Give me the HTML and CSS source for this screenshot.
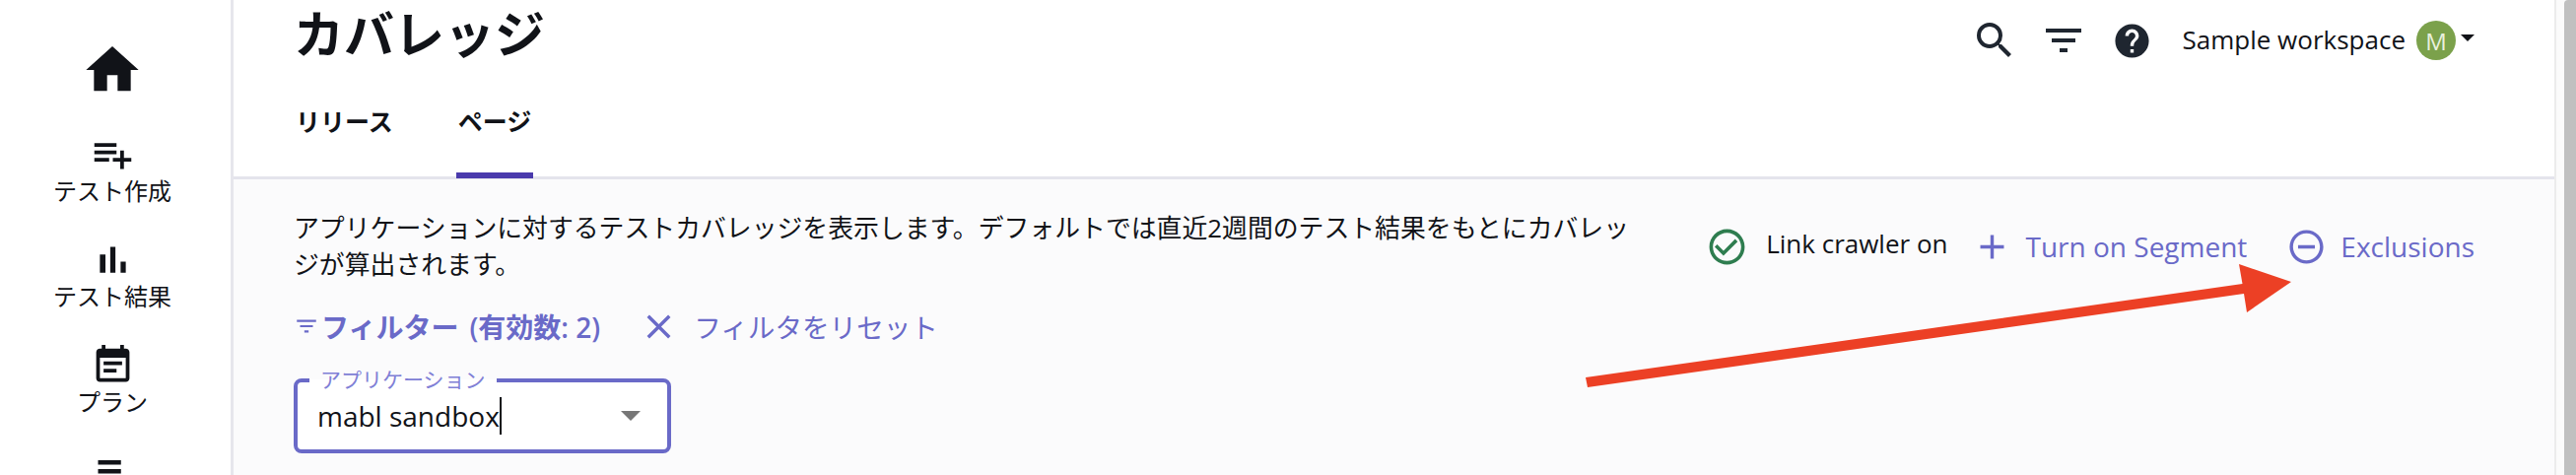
FILE: index.html
```html
<!DOCTYPE html>
<html lang="ja">
<head>
  <meta charset="UTF-8">
  <title>カバレッジ</title>
  <link rel="stylesheet" href="styles.css">
</head>
<body>
  <nav class="sidebar">
    <a class="nav-home">
      <svg class="icon-home" viewBox="0 0 24 24"><path d="M10 20v-6h4v6h5v-8h3L12 3 2 12h3v8z"/></svg>
    </a>
    <a class="nav-item">
      <svg class="icon-nav" viewBox="0 0 24 24"><path d="M14 10H2v2h12v-2zm0-4H2v2h12V6zm4 8v-4h-2v4h-4v2h4v4h2v-4h4v-2h-4zM2 16h8v-2H2v2z"/></svg>
      <span>テスト作成</span>
    </a>
    <a class="nav-item">
      <svg class="icon-nav" viewBox="0 0 24 24"><path d="M5 9.2h3V19H5zM10.6 5h2.8v14h-2.8zm5.6 8H19v6h-2.8z"/></svg>
      <span>テスト結果</span>
    </a>
    <a class="nav-item">
      <svg class="icon-nav" viewBox="0 0 24 24"><path d="M17 10H7v2h10v-2zm2-7h-1V1h-2v2H8V1H6v2H5c-1.11 0-1.99.9-1.99 2L3 19c0 1.1.89 2 2 2h14c1.1 0 2-.9 2-2V5c0-1.1-.9-2-2-2zm0 16H5V8h14v11zm-5-5H7v2h7v-2z"/></svg>
      <span>プラン</span>
    </a>
    <a class="nav-item">
      <svg class="icon-nav" viewBox="0 0 24 24"><path d="M4 6.4h12.4v2.4H4zM4 11.2h12.4v2.4H4zM4 16h12.4v2.4H4z"/></svg>
    </a>
  </nav>

  <div class="main">
    <header class="header">
      <div class="header-top">
        <h1 class="title">カバレッジ</h1>
        <div class="header-actions">
          <svg class="icon-search" viewBox="0 0 24 24"><path d="M15.5 14h-.79l-.28-.27A6.471 6.471 0 0 0 16 9.5 6.5 6.5 0 1 0 9.5 16c1.61 0 3.09-.59 4.23-1.57l.27.28v.79l5 4.99L20.49 19l-4.99-5zm-6 0C7.01 14 5 11.99 5 9.5S7.01 5 9.5 5 14 7.01 14 9.5 11.99 14 9.5 14z"/></svg>
          <svg class="icon-sort" viewBox="0 0 24 24"><path d="M10 18h4v-2h-4v2zM3 6v2h18V6H3zm3 7h12v-2H6v2z"/></svg>
          <svg class="icon-help" viewBox="0 0 24 24"><path d="M12 2C6.48 2 2 6.48 2 12s4.48 10 10 10 10-4.48 10-10S17.52 2 12 2zm1 17h-2v-2h2v2zm2.07-7.75l-.9.92C13.45 12.9 13 13.5 13 15h-2v-.5c0-1.1.45-2.1 1.17-2.83l1.24-1.26c.37-.36.59-.86.59-1.41 0-1.1-.9-2-2-2s-2 .9-2 2H8c0-2.21 1.79-4 4-4s4 1.79 4 4c0 .88-.36 1.68-.93 2.25z"/></svg>
          <span class="workspace">Sample workspace</span>
          <span class="avatar">M</span>
          <span class="caret"></span>
        </div>
      </div>
      <div class="tabs">
        <a class="tab">リリース</a>
        <a class="tab tab-active">ページ</a>
      </div>
    </header>

    <section class="content">
      <div class="info-row">
        <p class="description">アプリケーションに対するテストカバレッジを表示します。デフォルトでは直近2週間のテスト結果をもとにカバレッジが算出されます。</p>
        <div class="info-actions">
          <svg class="icon-check" viewBox="0 0 24 24"><path d="M16.59 7.58 10 14.17l-3.59-3.58L5 12l5 5 8-8zM12 2C6.48 2 2 6.48 2 12s4.48 10 10 10 10-4.48 10-10S17.52 2 12 2zm0 18c-4.42 0-8-3.58-8-8s3.58-8 8-8 8 3.58 8 8-3.58 8-8 8z"/></svg>
          <span class="crawler">Link crawler on</span>
          <svg class="icon-action icon-plus" viewBox="0 0 24 24"><path d="M19 13h-6v6h-2v-6H5v-2h6V5h2v6h6v2z"/></svg>
          <a class="action-link">Turn on Segment</a>
          <svg class="icon-action icon-minus" viewBox="0 0 24 24"><path d="M7 11v2h10v-2H7zm5-9C6.48 2 2 6.48 2 12s4.48 10 10 10 10-4.48 10-10S17.52 2 12 2zm0 18c-4.41 0-8-3.59-8-8s3.59-8 8-8 8 3.59 8 8-3.59 8-8 8z"/></svg>
          <a class="action-link">Exclusions</a>
        </div>
      </div>

      <div class="filter-row">
        <svg class="icon-filter" viewBox="0 0 24 24"><path d="M10 18h4v-2h-4v2zM3 6v2h18V6H3zm3 7h12v-2H6v2z"/></svg>
        <strong class="filter-title">フィルター</strong>
        <strong class="filter-count">(有効数: 2)</strong>
        <svg class="icon-action icon-close" viewBox="0 0 24 24"><path d="M19 6.41L17.59 5 12 10.59 6.41 5 5 6.41 10.59 12 5 17.59 6.41 19 12 13.41 17.59 19 19 17.59 13.41 12z"/></svg>
        <a class="filter-reset">フィルタをリセット</a>
      </div>

      <div class="select">
        <label class="select-label">アプリケーション</label>
        <span class="select-value">mabl sandbox</span><span class="text-cursor"></span>
        <span class="select-arrow"></span>
      </div>
    </section>

    <svg class="annotation" viewBox="0 0 2614 482">
      <polygon points="1609,383 2275.5,288 2272,268 2325,286 2280,317 2277,298 1611,393"/>
    </svg>
  </div>

  <div class="scrollbar"><div class="scrollbar-thumb"></div></div>
</body>
</html>
```

FILE: styles.css
```css
* {
  box-sizing: border-box;
}
html, body {
  height: 100%;
}
body {
  margin: 0;
  display: flex;
  overflow: hidden;
  background-color: #fff;
  color: #111318;
  font-family: "Open Sans", "Noto Sans CJK JP", sans-serif;
}

/* sidebar */
.sidebar {
  flex: none;
  width: 237px;
  height: 482px;
  padding: 39px 6px 0 0;
  overflow: hidden;
  border-right: 3px solid #e6e6ec;
  display: flex;
  flex-direction: column;
  align-items: center;
}
.sidebar svg {
  fill: #111318;
  display: block;
}
.nav-home {
  flex: none;
  height: 93px;
}
.icon-home {
  width: 64px;
  height: 64px;
}
.nav-item {
  flex: none;
  height: 107px;
  display: flex;
  flex-direction: column;
  align-items: center;
  font-size: 24px;
  line-height: 34px;
}
.sidebar .icon-nav {
  width: 45px;
  height: 45px;
  margin: 2px 0 -2px;
}

/* header */
.main {
  flex: 1;
  min-width: 0;
  position: relative;
  display: flex;
  flex-direction: column;
}
.header {
  flex: none;
  height: 182px;
  padding: 0 81px 0 63px;
  border-bottom: 3px solid #e4e4ec;
  display: flex;
  flex-direction: column;
}
.header-top {
  height: 92px;
  display: flex;
  justify-content: space-between;
  align-items: flex-start;
}
.title {
  margin: 0 0 0 -2px;
  font-size: 51px;
  font-weight: 600;
  line-height: 68px;
}
.header-actions {
  padding-top: 16px;
  display: flex;
  align-items: center;
  height: 66px;
  fill: #1f2630;
}
.icon-search, .icon-sort {
  width: 48px;
  height: 48px;
}
.icon-sort {
  margin-left: 22px;
}
.icon-help {
  width: 41px;
  height: 41px;
  margin-left: 25px;
}
.workspace {
  margin: -2px 0 0 31px;
  font-size: 26px;
}
.avatar {
  width: 40px;
  height: 40px;
  margin-left: 11px;
  border-radius: 50%;
  background-color: #7ba14b;
  color: #e8f0dc;
  font-size: 24px;
  display: flex;
  align-items: center;
  justify-content: center;
}
.caret {
  width: 0;
  height: 0;
  margin: 0 0 6px 5px;
  border-left: 7px solid transparent;
  border-right: 7px solid transparent;
  border-top: 7px solid #111318;
}
.tabs {
  display: flex;
  gap: 64px;
  height: 87px;
  margin-bottom: -3px;
}
.tab {
  padding: 0 2px;
  margin-left: -2px;
  height: 89px;
  font-size: 25px;
  font-weight: 600;
  line-height: 62px;
}
.tab-active {
  border-bottom: 6px solid #4a3aac;
}

/* content */
.content {
  flex: 1;
  padding: 0 81px 0 61px;
  background-color: #fbfbfc;
}
.info-row {
  display: flex;
  justify-content: space-between;
  height: 124px;
  padding-top: 31px;
}
.description {
  width: 1375px;
  margin: 0;
  font-size: 25.85px;
  line-height: 37px;
}
.info-actions {
  display: flex;
  align-items: center;
  height: 74px;
  fill: #6a6ac8;
}
.icon-check {
  width: 43px;
  height: 43px;
  fill: #2e7d4f;
}
.crawler {
  margin: 0 0 6px 18px;
  font-size: 26px;
}
.icon-action {
  width: 41px;
  height: 41px;
}
.icon-plus {
  margin-left: 24px;
}
.icon-minus {
  margin-left: 40px;
}
.action-link {
  margin-left: 14px;
  color: #6a6ac8;
  font-size: 28px;
}
.filter-row {
  display: flex;
  align-items: center;
  height: 50px;
  color: #6a6ac8;
  fill: #6a6ac8;
}
.icon-filter {
  width: 26px;
  height: 26px;
}
.filter-title {
  margin-left: 2px;
  font-size: 28px;
  font-weight: 700;
}
.filter-count {
  margin-left: 11px;
  font-size: 28px;
  font-weight: 600;
}
.icon-close {
  margin-left: 39px;
}
.filter-reset {
  margin-left: 15px;
  font-size: 27.6px;
}

/* select */
.select {
  position: relative;
  width: 383px;
  height: 76px;
  margin-top: 28px;
  padding-left: 20px;
  border: 4px solid #6a6ac8;
  border-radius: 8px;
  background-color: #fff;
  display: flex;
  align-items: center;
}
.select-label {
  position: absolute;
  top: -17px;
  left: 12px;
  padding: 0 11px;
  background: linear-gradient(#fbfbfc 50%, #fff 50%);
  color: #7f7fd6;
  font-size: 21px;
  line-height: 28px;
}
.select-value {
  font-size: 28px;
}
.text-cursor {
  width: 2px;
  height: 38px;
  background-color: #111318;
}
.select-arrow {
  margin-left: auto;
  margin-right: 27px;
  width: 0;
  height: 0;
  border-left: 10px solid transparent;
  border-right: 10px solid transparent;
  border-top: 10px solid #777;
}

/* red arrow drawn over the page */
.annotation {
  position: absolute;
  left: -237px;
  top: 0;
  width: 2614px;
  height: 482px;
  fill: #ec4025;
  pointer-events: none;
}

/* scrollbar */
.scrollbar {
  flex: none;
  width: 22px;
  height: 482px;
  padding-left: 8px;
  border-left: 2px solid #ececec;
  background-color: #fbfbfb;
}
.scrollbar-thumb {
  height: 100%;
  background-color: #c0c0c0;
  border-radius: 4px 0 0 0;
}
```
